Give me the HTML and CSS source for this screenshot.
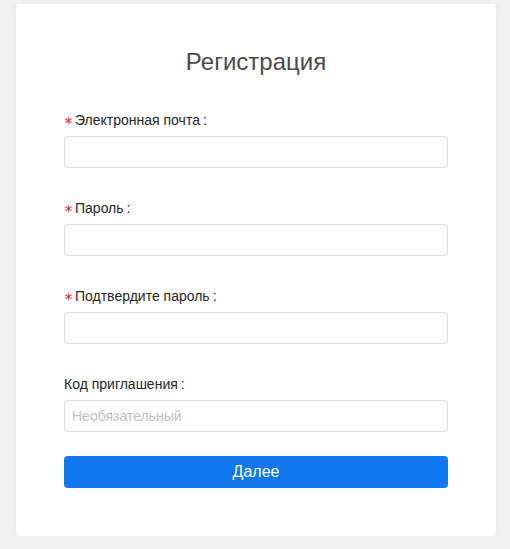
FILE: index.html
```html
<!DOCTYPE html>
<html lang="ru">
<head>
    <meta charset="UTF-8">
    <meta name="viewport" content="width=device-width, initial-scale=1.0">
    <title>Регистрация</title>
    <link rel="stylesheet" href="styles.css">
</head>
<body>
    <div class="card">
        <h1>Регистрация</h1>
        <form class="reg-form">
            <div class="form-item">
                <label class="required" for="email">Электронная почта</label>
                <input type="text" id="email">
            </div>
            <div class="form-item">
                <label class="required" for="password">Пароль</label>
                <input type="password" id="password">
            </div>
            <div class="form-item">
                <label class="required" for="confirm">Подтвердите пароль</label>
                <input type="password" id="confirm">
            </div>
            <div class="form-item">
                <label for="invite">Код приглашения</label>
                <input type="text" id="invite" placeholder="Необязательный">
            </div>
            <button type="submit">Далее</button>
        </form>
    </div>
</body>
</html>
```
FILE: styles.css
```css
body {
    margin: 0;
    padding: 4px 14px 0 16px;
    background: #f2f2f2;
    font-family: 'Liberation Sans', Arial, sans-serif;
}

.card {
    width: 480px;
    box-sizing: border-box;
    background: #fff;
    border-radius: 4px;
    padding: 42px 48px 48px;
    box-shadow: 0 2px 10px rgba(0, 0, 0, 0.08);
}

h1 {
    margin: 0 0 26px;
    text-align: center;
    font-size: 24px;
    line-height: 32px;
    font-weight: normal;
    color: #4a4a4a;
}

.form-item {
    margin-bottom: 24px;
}

label {
    display: block;
    height: 32px;
    line-height: 32px;
    font-size: 14px;
    color: #262626;
}

label::after {
    content: ":";
    margin: 0 8px 0 3px;
}

label.required::before {
    content: "*";
    display: inline-block;
    width: 8px;
    margin-right: 3px;
    color: #f5222d;
    font-family: 'DejaVu Sans Mono', monospace;
    font-size: 15px;
    line-height: 16px;
    position: relative;
    top: 4px;
}

input {
    display: block;
    width: 100%;
    height: 32px;
    box-sizing: border-box;
    padding: 4px 7px;
    border: 1px solid #d9d9d9;
    border-radius: 4px;
    font-family: inherit;
    font-size: 14px;
    color: #333;
    outline: none;
}

input::placeholder {
    color: #bfbfbf;
}

button {
    display: block;
    width: 100%;
    height: 32px;
    border: none;
    border-radius: 4px;
    background: #1077ee;
    color: #fff;
    font-family: inherit;
    font-size: 16px;
    cursor: pointer;
}
```
